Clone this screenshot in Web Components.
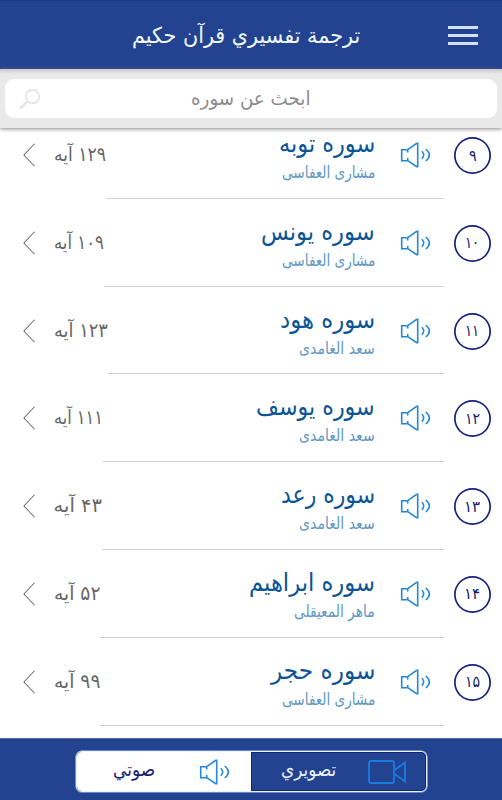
<!DOCTYPE html>
<html lang="ar" dir="rtl">
<head>
<meta charset="utf-8">
<title>ترجمة تفسيري قرآن حكيم</title>
<style>
body {
  margin: 0;
  background: #fff;
  font-family: "DejaVu Sans", sans-serif;
}
</style>
</head>
<body>
<quran-app></quran-app>

<script>
class FitText extends HTMLElement {
  constructor() {
    super();
    this.attachShadow({ mode: "open" });
    this.shadowRoot.innerHTML = `
<style>
:host {
  display: block;
  white-space: nowrap;
  line-height: 1;
}
span {
  display: inline-block;
  transform-origin: 100% 50%;
}
</style>
<span><slot></slot></span>`;
  }
  connectedCallback() {
    const width = Number(this.getAttribute("width"));
    const span = this.shadowRoot.querySelector("span");
    this.style.width = width + "px";
    span.style.transform = `scaleX(${width / span.offsetWidth})`;
  }
}
customElements.define("fit-text", FitText);

class SpeakerIcon extends HTMLElement {
  constructor() {
    super();
    this.attachShadow({ mode: "open" });
    this.shadowRoot.innerHTML = `
<style>
:host { display: block; width: 32px; height: 26px; }
svg { display: block; }
</style>
<svg width="32" height="26" viewBox="0 0 32 26" fill="none" stroke="#2388d8" stroke-width="1.6">
  <path d="M7.700 10.500V7.700H1.700v11h6V16M7.700 7.700l9-6.300h1v23.200h-1l-9-6"/>
  <path d="M21.800 9.300q3.800 3.700 0 7.400M25.800 7q7.200 6 0 12"/>
</svg>`;
  }
}
customElements.define("speaker-icon", SpeakerIcon);

class AppHeader extends HTMLElement {
  constructor() {
    super();
    this.attachShadow({ mode: "open" });
    this.shadowRoot.innerHTML = `
<style>
:host {
  display: grid;
  grid-template-columns: 118px 1fr 132px;
  align-items: center;
  height: 69px;
  box-sizing: border-box;
  padding: 2px 24px 0 0;
  background: #234290;
  border-top: 1px solid #1c3681;
  border-bottom: 1px solid #1f3b86;
  color: #f0f9ff;
  font-size: 22px;
}
.menu {
  display: grid;
  gap: 5px;
  width: 30px;
}
.menu i { height: 3px; background: #d3e0fa; }
</style>
<div class="menu"><i></i><i></i><i></i></div>
<slot></slot>`;
  }
}
customElements.define("app-header", AppHeader);

class SearchBar extends HTMLElement {
  constructor() {
    super();
    this.attachShadow({ mode: "open" });
    this.shadowRoot.innerHTML = `
<style>
:host {
  display: block;
  position: relative;
  z-index: 1;
  height: 59px;
  box-sizing: border-box;
  padding: 10px 5px;
  background: linear-gradient(#c9c9c9, #e9e9e9 5px);
  box-shadow: 0 1px 4px #888;
}
.box {
  display: flex;
  align-items: center;
  justify-content: space-between;
  height: 39px;
  box-sizing: border-box;
  padding: 0 186px 0 13px;
  border-radius: 9px;
  background: #fff;
  color: #8c8c8c;
  font-size: 19.5px;
}
</style>
<div class="box">
  <slot></slot>
  <svg width="24" height="24" viewBox="0 0 24 24" fill="none" stroke="#e6e6e6">
    <circle cx="14.500" cy="9.500" r="6.700" stroke-width="1.900"/>
    <path d="M9.500 14.500 2 21.500" stroke-width="2.600"/>
  </svg>
</div>`;
  }
}
customElements.define("search-bar", SearchBar);

class SuraRow extends HTMLElement {
  constructor() {
    super();
    this.attachShadow({ mode: "open" });
    this.shadowRoot.innerHTML = `
<style>
:host {
  display: flex;
  height: 87.8px;
  padding: 0 11px 0 23px;
}
.badge {
  display: flex;
  align-items: center;
  justify-content: center;
  width: 37px;
  height: 37px;
  margin: 26px 0 0 10px;
  box-shadow: inset 0 0 0 1.7px #14207c;
  border-radius: 50%;
  color: #14206c;
  font-size: 16px;
  line-height: 1;
}
.main {
  display: flex;
  flex: 1;
  box-sizing: border-box;
  border-bottom: 1px solid #d3d3d3;
  padding-right: 12px;
}
speaker-icon { margin: 31px 0 0 25px; }
.names { padding-top: 20px; }
::slotted([slot=name]) { color: #0c5595; font-size: 25px; height: 34px; }
::slotted([slot=reader]) { color: #5f97c4; font-size: 16.5px; }
.count { padding-top: 34px; }
::slotted([slot=count]) { color: #666; font-size: 19.5px; }
.arrow { margin: 32px 19px 0 0; }
</style>
<div class="badge"><slot name="number"></slot></div>
<div class="main">
  <speaker-icon></speaker-icon>
  <div class="names"><slot name="name"></slot><slot name="reader"></slot></div>
</div>
<div class="count"><slot name="count"></slot></div>
<svg class="arrow" width="12" height="24" fill="none" stroke="#444" stroke-width="1"><path d="M11.700.700.800 12l10.900 11.300"/></svg>`;
  }
}
customElements.define("sura-row", SuraRow);

class ModeSwitch extends HTMLElement {
  constructor() {
    super();
    this.attachShadow({ mode: "open" });
    this.shadowRoot.innerHTML = `
<style>
:host {
  display: flex;
  justify-content: center;
  align-items: flex-start;
  height: 62px;
  box-sizing: border-box;
  padding-top: 12px;
  background: #234290;
  border-top: 1px solid #53699f;
}
.switch {
  display: flex;
  width: 351px;
  height: 41px;
  box-sizing: border-box;
  border: 1px solid #e8f2ff;
  box-shadow: 0 0 0 .6px #b9c8ee;
  border-radius: 6px;
  overflow: hidden;
  font-size: 19px;
}
.side {
  display: flex;
  flex: 1;
  align-items: center;
  box-sizing: border-box;
}
.side ::slotted(*) { margin-top: -4px; }
.side { padding-top: 0; }
.video { color: #e9f3ff; padding-right: 19px; gap: 31px; border: 1px solid #142774; border-radius: 0 5px 5px 0; }
.audio { background: #fff; color: #15206f; padding-right: 20px; gap: 43px; }
</style>
<div class="switch">
  <div class="side video">
    <svg width="38" height="24" viewBox="0 0 38 24" fill="none" stroke="#187be0" stroke-width="1.900">
      <rect x="1" y="1" width="25" height="22" rx="2"/>
      <path d="M26 10.500 37 2.500v19L26 13.500"/>
    </svg>
    <slot name="video"></slot>
  </div>
  <div class="side audio"><speaker-icon></speaker-icon><slot name="audio"></slot></div>
</div>`;
  }
}
customElements.define("mode-switch", ModeSwitch);

// number, number width, name, name width, reader, reader width, verses, verses width
const SURAS = [
  ["۹", 8, "سوره توبه", 96, "مشاری العفاسی", 93, "۱۲۹ آیه", 52],
  ["۱۰", 14, "سوره یونس", 114, "مشاری العفاسی", 93, "۱۰۹ آیه", 50],
  ["۱۱", 14, "سوره هود", 95, "سعد الغامدی", 76, "۱۲۳ آیه", 54],
  ["۱۲", 15, "سوره یوسف", 119, "سعد الغامدی", 76, "۱۱۱ آیه", 49],
  ["۱۳", 16, "سوره رعد", 94, "سعد الغامدی", 76, "۴۳ آیه", 48],
  ["۱۴", 16, "سوره ابراهیم", 126, "ماهر المعیقلی", 81, "۵۲ آیه", 46],
  ["۱۵", 15, "سوره حجر", 104, "مشاری العفاسی", 93, "۹۹ آیه", 46],
];

class QuranApp extends HTMLElement {
  constructor() {
    super();
    this.attachShadow({ mode: "open" });
    const rows = SURAS.map(
      ([number, numberWidth, name, nameWidth, reader, readerWidth, count, countWidth]) => `
  <sura-row>
    <fit-text slot="number" width="${numberWidth}">${number}</fit-text>
    <fit-text slot="name" width="${nameWidth}">${name}</fit-text>
    <fit-text slot="reader" width="${readerWidth}">${reader}</fit-text>
    <fit-text slot="count" width="${countWidth}">${count}</fit-text>
  </sura-row>`
    ).join("");
    this.shadowRoot.innerHTML = `
<style>
:host {
  display: flex;
  flex-direction: column;
  height: 800px;
  overflow: hidden;
}
.list {
  flex: 1;
  overflow: hidden;
}
.list sura-row:first-child { margin-top: -17px; }
</style>
<app-header><fit-text width="228">ترجمة تفسيري قرآن حكيم</fit-text></app-header>
<search-bar><fit-text width="120">ابحث عن سوره</fit-text></search-bar>
<div class="list">${rows}</div>
<mode-switch>
  <fit-text slot="video" width="55">تصويري</fit-text>
  <fit-text slot="audio" width="42">صوتي</fit-text>
</mode-switch>`;
  }
}
customElements.define("quran-app", QuranApp);
</script>
</body>
</html>
